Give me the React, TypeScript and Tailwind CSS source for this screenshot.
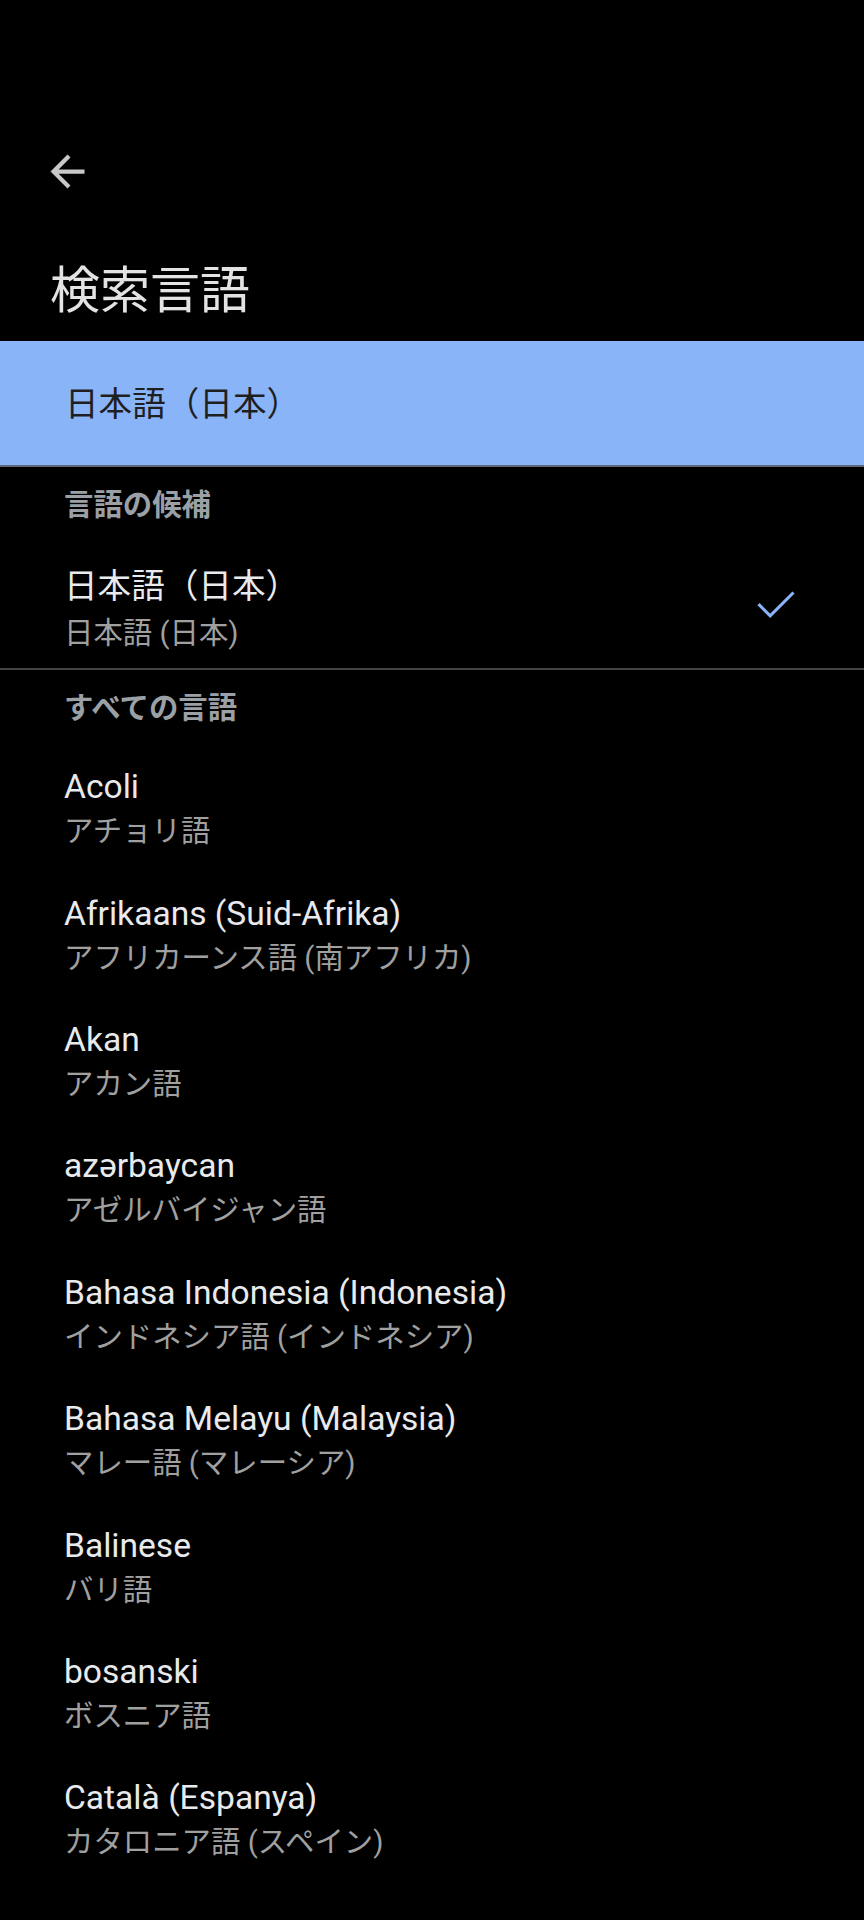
import React from "react";

const languages: { name: string; local: string }[] = [
  { name: "Acoli", local: "アチョリ語" },
  { name: "Afrikaans (Suid-Afrika)", local: "アフリカーンス語 (南アフリカ)" },
  { name: "Akan", local: "アカン語" },
  { name: "azərbaycan", local: "アゼルバイジャン語" },
  { name: "Bahasa Indonesia (Indonesia)", local: "インドネシア語 (インドネシア)" },
  { name: "Bahasa Melayu (Malaysia)", local: "マレー語 (マレーシア)" },
  { name: "Balinese", local: "バリ語" },
  { name: "bosanski", local: "ボスニア語" },
  { name: "Català (Espanya)", local: "カタロニア語 (スペイン)" },
];

const font = "font-['Roboto','Noto_Sans_CJK_JP',sans-serif]";

const SectionHeader = ({ label }: { label: string }) => (
  <div className="h-[76px] pl-[64px] text-[29.4px] leading-[76px] font-bold text-[#9aa0a6]">
    {label}
  </div>
);

export default function App() {
  return (
    <div className={`w-[864px] h-[1920px] overflow-hidden bg-black ${font}`}>
      {/* Toolbar */}
      <div className="pt-[146px] pl-[42px]">
        <svg width="51" height="51" viewBox="0 0 24 24" fill="#c8c8c8">
          <path d="M20 11H7.83l5.59-5.59L12 4l-8 8 8 8 1.41-1.41L7.83 13H20v-2z" />
        </svg>
      </div>
      <h1 className="mt-[64px] mb-[20px] pl-[50px] text-[50px] leading-[60px] font-normal text-[#e3e3e3]">
        検索言語
      </h1>

      {/* Selected */}
      <div className="h-[124px] flex items-center pl-[65px] pt-[5px] bg-[#8ab4f8] text-[33.6px] text-[#1f1f1f]">
        日本語（日本）
      </div>
      <div className="h-[2px] bg-[#5f6878]" />

      {/* Suggested */}
      <SectionHeader label="言語の候補" />
      <div className="flex items-center pl-[64px] pr-[60px] h-[125px]">
        <div className="flex-1 pt-[20px] self-stretch">
          <div className="text-[33.6px] leading-[48px] text-[#e8eaed]">日本語（日本）</div>
          <div className="text-[29.4px] leading-[44px] text-[#a0a0a0]">日本語 (日本)</div>
        </div>
        <svg width="56" height="56" viewBox="0 0 24 24" fill="none" stroke="#8ab4f8" strokeWidth="1.3" className="mb-[6px]">
          <path d="M4.5 12.5l5 5 10-10" />
        </svg>
      </div>
      <div className="h-[2px] bg-[#444444]" />

      {/* All languages */}
      <SectionHeader label="すべての言語" />
      <div className="flex flex-col">
        {languages.map((l) => (
          <div key={l.name} className="h-[126.4px] pt-[19.2px] pl-[64px]">
            <div className="text-[33.6px] leading-[44px] text-[#e8eaed]">{l.name}</div>
            <div className="text-[29.4px] leading-[44px] text-[#a0a0a0]">{l.local}</div>
          </div>
        ))}
      </div>
    </div>
  );
}
